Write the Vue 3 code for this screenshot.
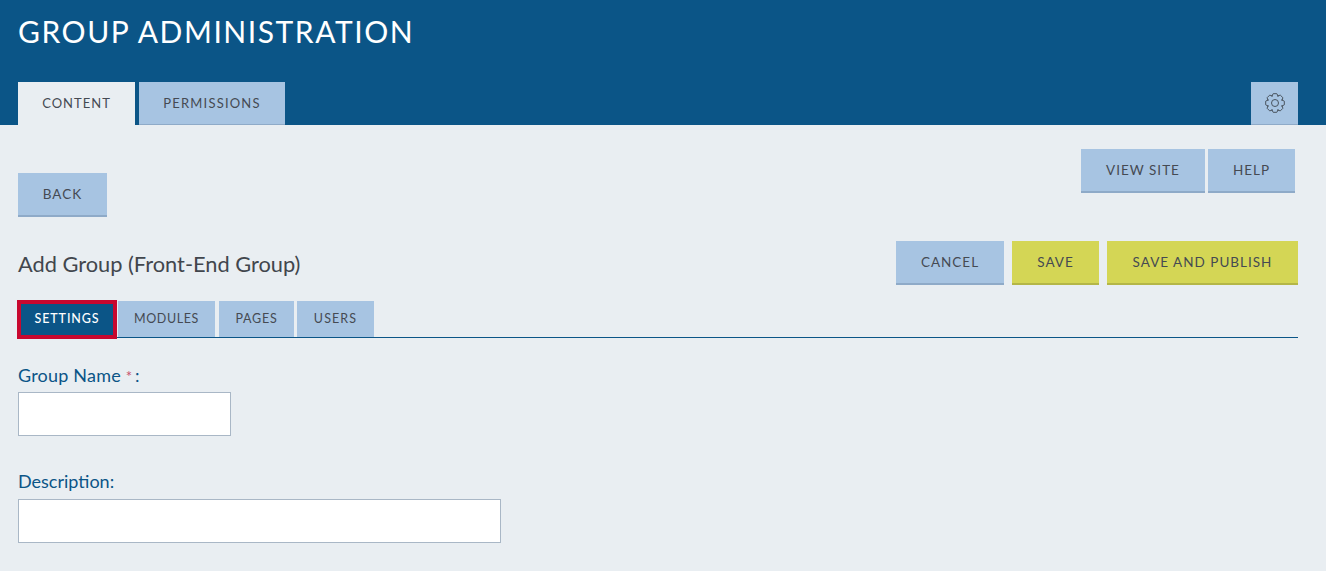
<script setup>
const subTabs = ['Settings', 'Modules', 'Pages', 'Users']

// 8 tooth gear outline, centred in a 24 box
const gearPath = (() => {
  const pts = []
  for (let k = 0; k < 8; k++) {
    const a = k * 45 - 90
    ;[[-26, 8.9], [-11, 11.4], [11, 11.4], [26, 8.9]].forEach(([da, r]) => {
      const t = ((a + da) * Math.PI) / 180
      pts.push(`${(12 + r * Math.cos(t)).toFixed(2)} ${(12 + r * Math.sin(t)).toFixed(2)}`)
    })
  }
  return `M${pts.join('L')}Z`
})()
</script>

<template>
  <div class="page">
    <header class="top">
      <h1 class="top-title">GROUP ADMINISTRATION</h1>
      <div class="top-tabs">
        <a class="top-tab active">CONTENT</a>
        <a class="top-tab">PERMISSIONS</a>
        <a class="gear-btn">
          <svg width="20" height="20" viewBox="0 0 24 24" fill="none" stroke="#4a5560" stroke-width="1.2" stroke-linejoin="round">
            <circle cx="12" cy="12" r="4.2" />
            <path :d="gearPath" />
          </svg>
        </a>
      </div>
    </header>

    <main class="content">
      <div class="util-row">
        <button class="btn back">BACK</button>
        <div class="util-right">
          <button class="btn view-site">VIEW SITE</button>
          <button class="btn help">HELP</button>
        </div>
      </div>

      <div class="title-row">
        <h2 class="form-title">Add Group (Front-End Group)</h2>
        <div class="actions">
          <button class="btn cancel">CANCEL</button>
          <button class="btn yellow save">SAVE</button>
          <button class="btn yellow publish">SAVE AND PUBLISH</button>
        </div>
      </div>

      <div class="sub-tabs">
        <a
          v-for="(tab, i) in subTabs"
          :key="tab"
          class="sub-tab"
          :class="[tab.toLowerCase(), { selected: i === 0 }]"
        >{{ tab.toUpperCase() }}</a>
      </div>

      <form class="form">
        <label class="field-label">Group Name <span class="req">*</span> :</label>
        <input class="input short" type="text">
        <label class="field-label second">Description:</label>
        <input class="input long" type="text">
      </form>
    </main>
  </div>
</template>

<style scoped>
.page {
  font-family: "Lato", "Open Sans", sans-serif;
  background: #e9eef2;
  min-height: 571px;
}

.top {
  background: #0b5587;
  height: 125px;
  padding: 0 28px 0 18px;
  box-sizing: border-box;
}

.top-title {
  margin: 0;
  padding-top: 13px;
  height: 82px;
  box-sizing: border-box;
  font-size: 30px;
  line-height: 36px;
  font-weight: 400;
  letter-spacing: 1.55px;
  color: #fff;
}

.top-tabs {
  display: flex;
  gap: 4px;
  height: 43px;
}

.top-tab {
  display: flex;
  align-items: center;
  justify-content: center;
  width: 146px;
  background: #a7c4e2;
  border-bottom: 1px solid #8eaac8;
  box-sizing: border-box;
  font-size: 13px;
  letter-spacing: 1.2px;
  color: #454a52;
}

.top-tab.active {
  width: 117px;
  background: #e9eef2;
  border-bottom-color: #e9eef2;
  letter-spacing: 1px;
}

.gear-btn {
  margin-left: auto;
  width: 47px;
  display: flex;
  align-items: center;
  justify-content: center;
  background: #a7c4e2;
  border-bottom: 1px solid #8eaac8;
  box-sizing: border-box;
}

.content {
  padding: 24px 28px 0 18px;
}

.util-row {
  display: flex;
  justify-content: space-between;
  align-items: flex-start;
  padding-right: 3px;
}

.util-right {
  display: flex;
  gap: 3px;
}

.btn {
  height: 44px;
  border: none;
  border-bottom: 2px solid #8eaac8;
  background: #a7c4e2;
  padding: 0;
  font-family: inherit;
  font-size: 13.5px;
  letter-spacing: 1px;
  color: #454a52;
}

.back {
  width: 89px;
  margin-top: 24px;
}

.view-site {
  width: 124px;
}

.help {
  width: 87px;
}

.title-row {
  display: flex;
  justify-content: space-between;
  align-items: center;
  margin-top: 24px;
}

.form-title {
  margin: 0;
  font-size: 21.8px;
  font-weight: 400;
  color: #41464d;
}

.actions {
  display: flex;
  gap: 8px;
}

.cancel {
  width: 108px;
}

.save {
  width: 87px;
}

.publish {
  width: 191px;
}

.yellow {
  background: #d4d655;
  border-bottom-color: #b4b647;
}

.sub-tabs {
  display: flex;
  align-items: flex-start;
  gap: 4px;
  height: 37px;
  margin-top: 16px;
  border-bottom: 1px solid #0b5587;
  box-sizing: border-box;
}

.sub-tab {
  display: flex;
  align-items: center;
  justify-content: center;
  height: 36px;
  padding-bottom: 2px;
  box-sizing: border-box;
  background: #a7c4e2;
  font-size: 12.5px;
  letter-spacing: 0.8px;
  color: #454a52;
}

.settings {
  width: 98px;
}

.modules {
  width: 97px;
  margin-left: -2px;
  letter-spacing: 0.6px;
}

.pages {
  width: 75px;
}

.users {
  width: 77px;
  margin-left: -1px;
  letter-spacing: 1.1px;
}

.sub-tab.selected {
  height: 37px;
  padding-bottom: 3px;
  background: #0b5587;
  color: #fff;
  font-weight: 500;
  letter-spacing: 0.9px;
  outline: 4px solid #c8082f;
  outline-offset: -3px;
}

.form {
  display: flex;
  flex-direction: column;
  align-items: flex-start;
}

.field-label {
  margin-top: 27px;
  height: 27px;
  font-size: 18px;
  line-height: 20px;
  letter-spacing: 0.2px;
  color: #0b5587;
}

.field-label.second {
  margin-top: 35px;
  height: 28px;
  letter-spacing: 0;
}

.req {
  color: #c8506a;
  font-size: 15px;
  margin-right: -2px;
}

.input {
  height: 44px;
  box-sizing: border-box;
  background: #fff;
  border: 1px solid #a9b7c6;
  border-radius: 0;
  outline: none;
  padding: 0 8px;
}

.short {
  width: 213px;
}

.long {
  width: 483px;
}
</style>

<style>
html, body {
  background: #e9eef2;
}
</style>
